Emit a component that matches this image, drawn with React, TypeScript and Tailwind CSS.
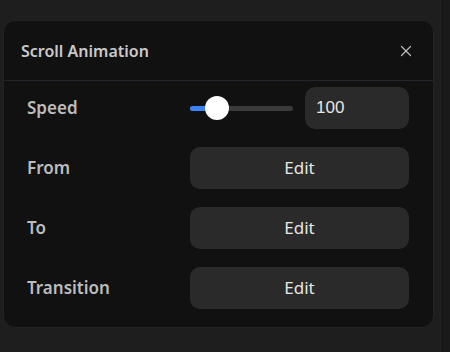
import { X } from 'lucide-react'

const rows = ['From', 'To', 'Transition']

export default function App() {
  return (
    <div className="flex h-[352px] w-[450px] bg-[#1e1e1e] font-['Noto_Sans',sans-serif]">
      <div className="flex-1 pl-[3px] pr-[8px] pt-5">
        {/* Panel */}
        <div className="flex h-[308px] flex-col rounded-xl border border-[#232323] bg-[#111111]">
          {/* Header */}
          <div className="flex h-[60px] items-center justify-between border-b border-[#23262c] pl-[17px] pr-[18px]">
            <span className="text-[16px] font-semibold text-[#c9c9c9]">Scroll Animation</span>
            <X size={18} strokeWidth={1.6} className="text-[#bdbdbd]" />
          </div>

          {/* Rows */}
          <div className="flex flex-col gap-[18px] pl-[23px] pr-[24px] pt-[6px]">
            <div className="flex h-[42px] items-center">
              <span className="w-[163px] text-[17px] font-semibold text-[#bcbcbc]">Speed</span>
              <div className="relative flex h-6 w-[103px] items-center">
                <div className="h-[5px] w-full rounded-full bg-[#3a3a3a]" />
                <div className="absolute left-0 top-[9.5px] h-[5px] w-[26px] rounded-full bg-[#3b82f6]" />
                <div className="absolute left-[15px] top-0 h-6 w-6 rounded-full bg-white" />
              </div>
              <div className="ml-3 flex h-[42px] flex-1 items-center rounded-[10px] bg-[#2a2a2a] pl-[11px] font-['Liberation_Sans',sans-serif] text-[17px] text-[#e6e6e6]">
                100
              </div>
            </div>
            {rows.map((r) => (
              <div key={r} className="flex h-[42px] items-center">
                <span className="w-[163px] text-[17px] font-semibold text-[#bcbcbc]">{r}</span>
                <button className="flex h-[42px] flex-1 items-center justify-center rounded-[10px] bg-[#2a2a2a] text-[17px] text-[#e6e6e6]">
                  Edit
                </button>
              </div>
            ))}
          </div>
        </div>
      </div>
      {/* Right edge strip */}
      <div className="w-[8px] border-l border-[#141414] bg-[#1a1a1a]" />
    </div>
  )
}
